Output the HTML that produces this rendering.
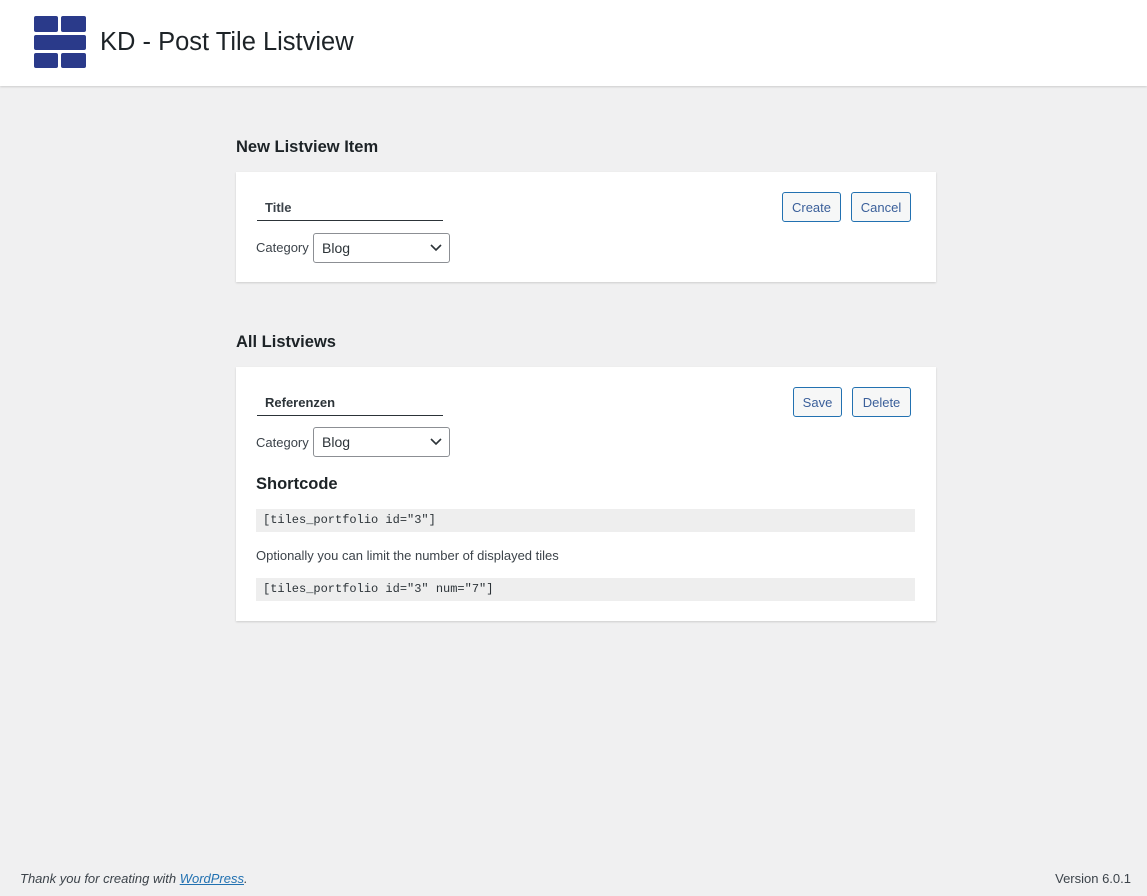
<!DOCTYPE html>
<html><head><style>
body{margin:0;width:1147px;height:896px;background:#f0f0f1;font-family:"Liberation Sans",sans-serif;color:#3c434a;position:relative;overflow:hidden}
.hdr{position:absolute;left:0;top:0;width:1147px;height:86px;background:#fff;box-shadow:0 1px 2px rgba(0,0,0,.15)}
.t{position:absolute;background:#2a3a8a;border-radius:2px}
.abs{position:absolute}
h2{position:absolute;margin:0;font-size:16.5px;font-weight:bold;color:#1d2327}
.card{position:absolute;left:236px;width:700px;background:#fff;box-shadow:0 1px 2px rgba(0,0,0,.15)}
.inp{position:absolute;left:21px;width:186px;height:28px;border-bottom:1px solid #2c3338;font-size:13px;font-weight:bold;line-height:30px;padding-left:8px;box-sizing:border-box}
.lbl{position:absolute;left:20px;font-size:13px}
.sel{position:absolute;left:77px;width:137px;height:30px;border:1px solid #8c8f94;border-radius:3px;box-sizing:border-box;font-size:14px;line-height:28px;padding-left:8px;color:#2c3338}
.sel svg{position:absolute;right:7px;top:10px}
.btn{position:absolute;height:30px;border:1px solid #2271b1;border-radius:3px;background:#f6f7f7;color:#3a5f9a;font-size:13px;line-height:30px;text-align:center;box-sizing:border-box}
.code{position:absolute;left:20px;width:659px;height:23px;background:#eee;font-family:"Liberation Mono",monospace;font-size:12px;line-height:23px;padding-left:7px;box-sizing:border-box;color:#2c3338}
</style></head><body>
<div class="hdr">
<div class="t" style="left:34px;top:16px;width:24px;height:16px"></div>
<div class="t" style="left:61px;top:16px;width:25px;height:16px"></div>
<div class="t" style="left:34px;top:35px;width:52px;height:15px"></div>
<div class="t" style="left:34px;top:53px;width:24px;height:15px"></div>
<div class="t" style="left:61px;top:53px;width:25px;height:15px"></div>
<div class="abs" style="left:100px;top:28px;font-size:25.5px;color:#1d2327">KD - Post Tile Listview</div>
</div>
<h2 style="left:236px;top:138px">New Listview Item</h2>
<div class="card" style="top:172px;height:110px">
<div class="inp" style="top:21px">Title</div>
<div class="btn" style="left:546px;top:20px;width:59px">Create</div>
<div class="btn" style="left:615px;top:20px;width:60px">Cancel</div>
<div class="lbl" style="top:68px">Category</div>
<div class="sel" style="top:61px">Blog<svg width="12" height="8"><path d="M1 1l5 5 5-5" stroke="#2c3338" stroke-width="1.6" fill="none"/></svg></div>
</div>
<h2 style="left:236px;top:333px">All Listviews</h2>
<div class="card" style="top:367px;height:254px">
<div class="inp" style="top:21px;color:#2c3338">Referenzen</div>
<div class="btn" style="left:557px;top:20px;width:49px">Save</div>
<div class="btn" style="left:616px;top:20px;width:59px">Delete</div>
<div class="lbl" style="top:68px">Category</div>
<div class="sel" style="top:60px">Blog<svg width="12" height="8"><path d="M1 1l5 5 5-5" stroke="#2c3338" stroke-width="1.6" fill="none"/></svg></div>
<div class="abs" style="left:20px;top:108px;font-size:16.5px;font-weight:bold;color:#1d2327">Shortcode</div>
<div class="code" style="top:142px">[tiles_portfolio id="3"]</div>
<div class="lbl" style="top:181px">Optionally you can limit the number of displayed tiles</div>
<div class="code" style="top:211px">[tiles_portfolio id="3" num="7"]</div>
</div>
<div class="abs" style="left:20px;top:871px;font-size:13px;font-style:italic">Thank you for creating with <span style="color:#2271b1;text-decoration:underline">WordPress</span>.</div>
<div class="abs" style="right:16px;top:871px;font-size:13px">Version 6.0.1</div>
</body></html>
